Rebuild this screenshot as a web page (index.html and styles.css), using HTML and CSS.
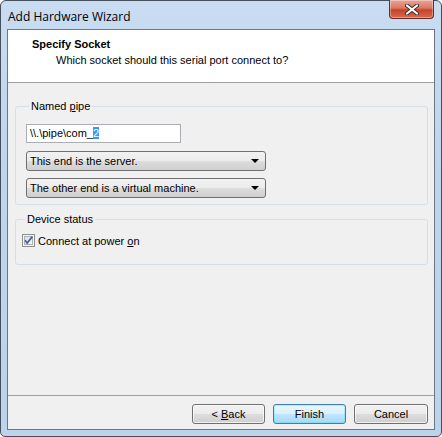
FILE: index.html
```html
<!DOCTYPE html>
<html>
<head>
<meta charset="utf-8">
<link rel="stylesheet" href="styles.css">
</head>
<body>
<div class="window">
  <div class="titlebar">
    <span class="title">Add Hardware Wizard</span>
    <div class="close">
      <svg width="14" height="11" viewBox="0 0 14 11"><path d="M2 1.5 L12 9.5 M12 1.5 L2 9.5" stroke="#3b2a2a" stroke-width="4" stroke-linecap="round"/><path d="M2 1.5 L12 9.5 M12 1.5 L2 9.5" stroke="#ffffff" stroke-width="2.2" stroke-linecap="round"/></svg>
    </div>
  </div>
  <div class="client">
    <div class="header">
      <div class="h-title">Specify Socket</div>
      <div class="h-sub">Which socket should this serial port connect to?</div>
    </div>
    <div class="body">
      <fieldset class="group pipe">
        <legend>Named <u>p</u>ipe</legend>
        <div class="textbox">\\.\pipe\com_<span class="sel">2</span></div>
        <div class="combo"><span>This end is the server.</span><i class="arrow"></i></div>
        <div class="combo"><span>The other end is a virtual machine.</span><i class="arrow"></i></div>
      </fieldset>
      <fieldset class="group status">
        <legend>Device status</legend>
        <label class="check">
          <svg width="13" height="13" viewBox="0 0 13 13">
            <defs><linearGradient id="cb" x1="0" y1="0" x2="1" y2="1"><stop offset="0" stop-color="#dcdcdc"/><stop offset="1" stop-color="#fbfbfb"/></linearGradient></defs>
            <rect x="0.5" y="0.5" width="12" height="12" fill="#f4f4f4" stroke="#8e8f8f"/>
            <rect x="2.5" y="2.5" width="8" height="8" fill="url(#cb)" stroke="#aeb3b9" stroke-width="1"/>
            <path d="M3 6.2 L5.2 9 L10.3 2.6" fill="none" stroke="#4d61a0" stroke-width="1.8"/>
          </svg>
          <span>Connect at power <u>o</u>n</span>
        </label>
      </fieldset>
    </div>
    <div class="footer">
      <button class="btn">&lt; <u>B</u>ack</button>
      <button class="btn default">Finish</button>
      <button class="btn">Cancel</button>
    </div>
  </div>
</div>
</body>
</html>
```

FILE: styles.css
```css
* { box-sizing: border-box; }
html, body { margin: 0; padding: 0; }
body {
  width: 442px;
  height: 437px;
  background: #ffffff;
  font-family: "Liberation Sans", Arial, sans-serif;
  font-size: 11px;
  color: #000;
}
.window {
  width: 442px;
  height: 437px;
  border: 1px solid #44505c;
  border-radius: 6px 6px 5px 5px;
  background: linear-gradient(180deg, #c9dcf1 0%, #bed5ee 40%, #bcd3ec 100%);
  padding: 0 6px 6px 6px;
  display: flex;
  flex-direction: column;
}
.titlebar {
  height: 28px;
  display: flex;
  justify-content: space-between;
  align-items: flex-start;
}
.title {
  font-family: "Open Sans", "Segoe UI", sans-serif;
  font-size: 12px;
  margin-top: 7px;
  padding-left: 1px;
  color: #000;
}
.close {
  width: 45px;
  height: 19px;
  margin-right: 1px;
  margin-top: -1px;
  border: 1px solid #6b2a22;
  border-top: none;
  border-radius: 0 0 4px 4px;
  background: linear-gradient(180deg, #e8a698 0%, #d9775f 45%, #c7432a 55%, #d56a4f 100%);
  display: flex;
  align-items: center;
  justify-content: center;
  box-shadow: inset 0 0 0 1px rgba(255,255,255,0.35);
}
.client {
  flex: 1;
  border: 1px solid #6a7785;
  background: #f0f0f0;
  display: flex;
  flex-direction: column;
}
.header {
  height: 53px;
  background: #ffffff;
  border-bottom: 1px solid #a0a0a0;
  padding: 7px 0 0 24px;
}
.h-title {
  font-weight: bold;
  line-height: 14px;
}
.h-sub {
  line-height: 14px;
  margin-top: 2px;
  padding-left: 24px;
}
.body {
  flex: 1;
  padding: 17px 6px 0 7px;
  display: flex;
  flex-direction: column;
}
.group {
  margin: 0;
  border: 1px solid #d5dfe5;
  border-radius: 3px;
  padding: 0 10px;
  min-width: 0;
}
.group legend {
  padding: 0 2px;
  margin-left: 3px;
  line-height: 13px;
}
.pipe {
  padding-top: 11px;
  padding-bottom: 6px;
  display: flex;
  flex-direction: column;
  gap: 8px;
}
.status {
  margin-top: 8px;
  padding: 8px 6px 17px 6px;
}
.textbox {
  width: 155px;
  height: 19px;
  border: 1px solid #abadb3;
  background: #ffffff;
  padding: 1px 3px;
  line-height: 15px;
  font-family: "Liberation Sans", Arial, sans-serif;
}
.sel {
  background: #3399ff;
  color: #ffffff;
}
.combo {
  width: 240px;
  height: 20px;
  border: 1px solid #707070;
  border-radius: 3px;
  background: linear-gradient(180deg, #f2f2f2 0%, #ebebeb 50%, #dddddd 51%, #cfcfcf 100%);
  display: flex;
  align-items: center;
  justify-content: space-between;
  padding: 0 6px 0 3px;
}
.combo + .combo { margin-top: -1px; }
.arrow {
  width: 0;
  height: 0;
  border-left: 4px solid transparent;
  border-right: 4px solid transparent;
  border-top: 4px solid #000;
}
.check {
  display: flex;
  align-items: center;
  gap: 3px;
  height: 13px;
}
.check svg { display: block; }
.footer {
  height: 34px;
  border-top: 1px solid #a0a0a0;
  display: flex;
  justify-content: flex-end;
  align-items: flex-start;
  gap: 8px;
  padding: 8px 6px 0 0;
}
.btn {
  width: 73px;
  height: 20px;
  border: 1px solid #707070;
  border-radius: 3px;
  background: linear-gradient(180deg, #f2f2f2 0%, #ebebeb 50%, #dddddd 51%, #cfcfcf 100%);
  font-family: "Liberation Sans", Arial, sans-serif;
  font-size: 11px;
  color: #000;
  padding: 0;
  box-shadow: inset 0 0 0 1px rgba(255,255,255,0.7);
}
.btn:last-child { width: 74px; }
.btn.default {
  border-color: #3c7fb1;
  background: linear-gradient(180deg, #eaf6fd 0%, #d9f0fc 50%, #bee6fd 51%, #a7d9f5 100%);
  box-shadow: inset 0 0 0 1px #48d9fd55;
}
```
